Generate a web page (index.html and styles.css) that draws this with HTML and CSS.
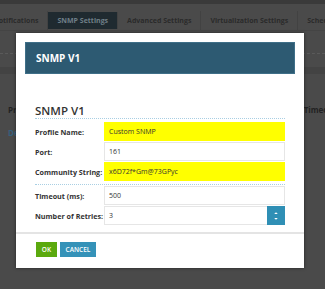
FILE: index.html
```html
<!DOCTYPE html>
<html>
<head>
<meta charset="utf-8">
<link rel="stylesheet" href="styles.css">
</head>
<body>
<div class="page">
  <div class="topstrip"></div>
  <div class="tabs">
    <div class="tab tab-first">Notifications</div>
    <div class="tab tab-active">SNMP Settings</div>
    <div class="tab">Advanced Settings</div>
    <div class="tab">Virtualization Settings</div>
    <div class="tab">Schedules</div>
  </div>
  <div class="dots"></div>
  <div class="band"></div>
  <div class="thead"><span>Profile</span><span class="th-right">Timeout</span></div>
  <div class="trow"><span>Default</span></div>
</div>

<div class="modal">
  <div class="modal-head">SNMP V1</div>
  <div class="modal-body">
    <div class="section-title">SNMP V1</div>
    <div class="group">
      <div class="row">
        <label class="lbl">Profile Name:</label>
        <div class="field hl">Custom SNMP</div>
      </div>
      <div class="row">
        <label class="lbl">Port:</label>
        <div class="field">161</div>
      </div>
      <div class="row">
        <label class="lbl">Community String:</label>
        <div class="field hl">x6D72f*Gm@73GPyc</div>
      </div>
    </div>
    <div class="group group2">
      <div class="row">
        <label class="lbl">Timeout (ms):</label>
        <div class="field">500</div>
      </div>
      <div class="row">
        <label class="lbl">Number of Retries:</label>
        <div class="field spin-field">3
          <div class="spin">
            <svg width="6" height="12" viewBox="0 0 6 12"><path d="M1.2 4 L3 2.2 L4.8 4Z M1.2 8 L3 9.8 L4.8 8Z" fill="#fff"/></svg>
          </div>
        </div>
      </div>
    </div>
  </div>
  <div class="modal-foot">
    <button class="btn btn-ok">OK</button>
    <button class="btn btn-cancel">CANCEL</button>
  </div>
</div>
</body>
</html>
```

FILE: styles.css
```css
html, body {
  margin: 0;
  padding: 0;
}
body {
  width: 325px;
  height: 289px;
  overflow: hidden;
  background: #4a4a4a;
  font-family: "Open Sans", "DejaVu Sans", sans-serif;
  position: relative;
}
.page {
  display: flex;
  flex-direction: column;
  overflow: hidden;
  width: 325px;
}
.topstrip {
  height: 4px;
  background: #3a3a3a;
  margin-bottom: 7px;
}
.tabs {
  display: flex;
  height: 19px;
  margin-left: -16px;
  border-bottom: 1px solid #444;
}
.tab {
  padding: 0 9px;
  font-size: 7px;
  font-weight: 700;
  color: #2b2b2b;
  line-height: 19px;
  white-space: nowrap;
  border-right: 1px solid #424242;
}
.tab-active {
  background: #1f2a30;
  color: #6f7f88;
  margin-top: 1px;
  line-height: 17px;
  height: 17px;
}
.dots {
  margin-top: 22px;
  border-top: 1px dashed #5a5a5a;
}
.band {
  margin-top: 13px;
  height: 7px;
  background: #434343;
}
.thead {
  margin-top: 30px;
  display: flex;
  justify-content: space-between;
  font-size: 8px;
  font-weight: 700;
  color: #222;
  padding: 0 0 0 8px;
}
.th-right {
  margin-right: -12px;
}
.trow {
  margin-top: 12px;
  font-size: 8px;
  font-weight: 700;
  color: #35607e;
  padding-left: 8px;
}

.modal {
  position: absolute;
  left: 16px;
  top: 33px;
  width: 288px;
  height: 235px;
  background: #fff;
  box-shadow: 0 0 3px rgba(0,0,0,0.5);
  display: flex;
  flex-direction: column;
}
.modal-head {
  margin: 9px 9px 0 9px;
  height: 30px;
  background: #2d5a72;
  border: 1px solid #3f6f88;
  color: #fff;
  font-size: 10px;
  font-weight: 700;
  line-height: 30px;
  padding-left: 10px;
}
.modal-body {
  padding: 0 19px;
}
.section-title {
  margin-top: 31px;
  font-size: 11.5px;
  font-weight: 600;
  color: #333;
  line-height: 12px;
  padding-bottom: 1px;
  border-bottom: 1px dotted #a9cfe3;
}
.group {
  padding-top: 3px;
  padding-bottom: 3px;
  border-bottom: 1px dotted #a9cfe3;
  display: flex;
  flex-direction: column;
  gap: 1px;
}
.group2 {
  border-bottom: none;
  padding-top: 1px;
  gap: 1px;
}
.row {
  display: flex;
  align-items: center;
  height: 19px;
}
.lbl {
  width: 69px;
  font-size: 7.2px;
  font-weight: 700;
  color: #333;
  white-space: nowrap;
}
.field {
  flex: 1;
  height: 19px;
  box-sizing: border-box;
  border: 1px solid #e6e6e6;
  font-size: 7px;
  color: #333;
  line-height: 17px;
  padding-left: 4px;
  position: relative;
}
.hl {
  background: #ffff00;
  border-color: #ffff00;
}
.spin {
  position: absolute;
  right: -1px;
  top: -1px;
  width: 18px;
  height: 19px;
  background: #2f8fb5;
  display: flex;
  align-items: center;
  justify-content: center;
}
.spin svg {
  display: block;
}
.modal-foot {
  margin-top: 4px;
  border-top: 2px solid #e4e4e4;
  padding: 8px 20px 0 20px;
  display: flex;
  gap: 3px;
}
.btn {
  border: none;
  height: 15px;
  padding: 0;
  font-family: "Open Sans", "DejaVu Sans", sans-serif;
  font-size: 6.5px;
  color: #fff;
  font-weight: 600;
}
.btn-ok {
  width: 21px;
  background: #5ba90e;
}
.btn-cancel {
  width: 36px;
  background: #3592b8;
}
```
